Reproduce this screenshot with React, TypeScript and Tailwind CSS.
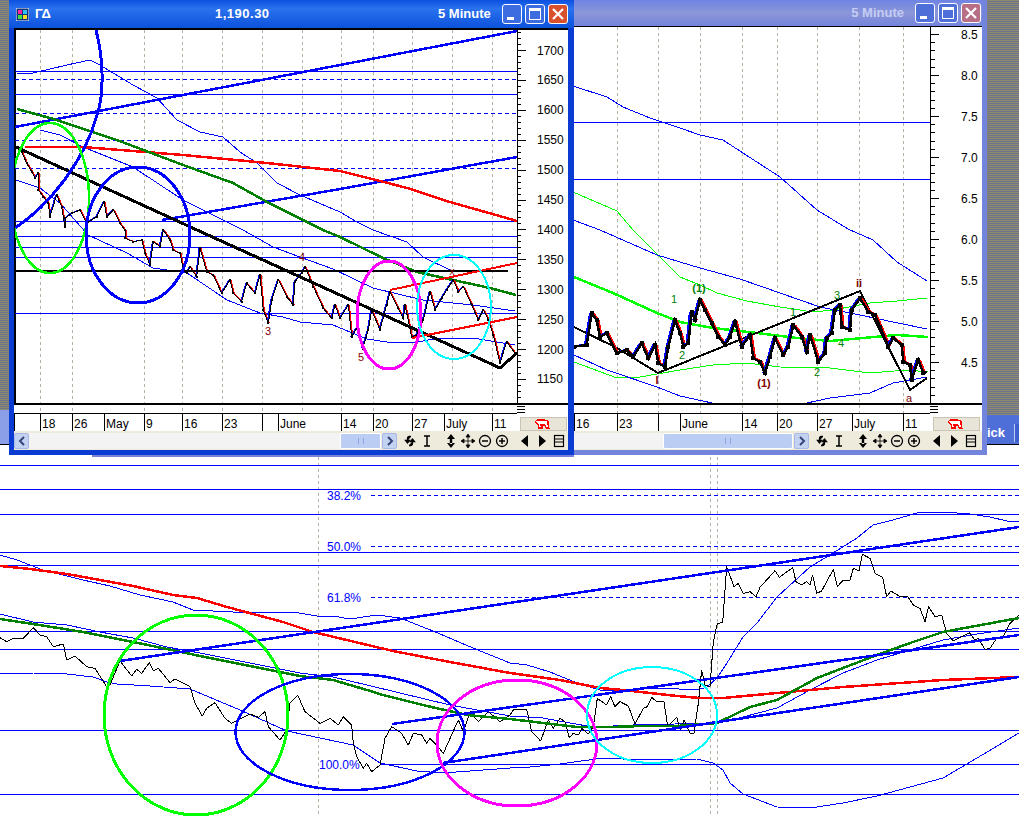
import React from 'react';

const BLUE = '#0000ff';
const RED = '#ff0000';
const DKGREEN = '#008000';
const LIME = '#00ff00';
const MAGENTA = '#ff00ff';
const CYAN = '#00ffff';
const MAROON = '#800000';
const GRID = '#b4b2a4';

// flat [x,y,x,y] list -> polyline points
const flat = (a: number[]) => {
  const out: string[] = [];
  for (let i = 0; i < a.length; i += 2) out.push(`${a[i]},${a[i + 1]}`);
  return out.join(' ');
};

// values read from the 3x crops, back to page pixels
const fromCrop = (ox: number, oy: number, a: number[]) =>
  a.map((v, i) => (i % 2 === 0 ? ox + v / 3 : oy + v / 3));

function Poly({ p, c, w = 1 }: { p: number[]; c: string; w?: number }) {
  return <polyline points={flat(p)} fill="none" stroke={c} strokeWidth={w} strokeLinejoin="round" />;
}

function HLine({ x1, x2, y, dashed, c = BLUE }: { x1: number; x2: number; y: number; dashed?: boolean; c?: string }) {
  return <line x1={x1} x2={x2} y1={y + 0.5} y2={y + 0.5} stroke={c} strokeWidth={1} strokeDasharray={dashed ? '4 3' : undefined} />;
}

function VGrid({ x, y1, y2 }: { x: number; y1: number; y2: number }) {
  return <line x1={x + 0.5} x2={x + 0.5} y1={y1} y2={y2} stroke={GRID} strokeWidth={1} strokeDasharray="3 3" />;
}

function Ring({ cx, cy, rx, ry, c, w }: { cx: number; cy: number; rx: number; ry: number; c: string; w: number }) {
  return <ellipse cx={cx} cy={cy} rx={rx} ry={ry} fill="none" stroke={c} strokeWidth={w} />;
}

// up moves are blue, down moves red, the black bars sit over them
function Price({ p, w, off, dot }: { p: number[]; w: number; off: number; dot: number }) {
  const segs = [];
  const dots = [];
  for (let i = 0; i + 3 < p.length; i += 2) {
    const up = p[i + 3] < p[i + 1];
    const dx = up ? -off : off;
    segs.push(
      <line key={i} x1={p[i] + dx} y1={p[i + 1]} x2={p[i + 2] + dx} y2={p[i + 3]} stroke={up ? BLUE : RED} strokeWidth={w} />
    );
    dots.push(<rect key={i} x={p[i] - dot / 2} y={p[i + 1] - dot / 2} width={dot} height={dot} fill="#000" />);
  }
  return (
    <g>
      {segs}
      <polyline points={flat(p)} fill="none" stroke="#000" strokeWidth={w} />
      {dots}
    </g>
  );
}

function Label({ x, y, c, size = 11, bold, children }: { x: number; y: number; c: string; size?: number; bold?: boolean; children: React.ReactNode }) {
  return (
    <text x={x} y={y} fill={c} fontSize={size} fontWeight={bold ? 700 : 400} textAnchor="middle">
      {children}
    </text>
  );
}

function DateAxis({ ticks, x1, x2, axisX, right }: { ticks: [number, string][]; x1: number; x2: number; axisX: number; right: number }) {
  const b = axisX + 20;
  return (
    <g>
      <rect x={axisX + 1} y={404} width={right - axisX} height={27} fill="#fff" />
      <line x1={x1} x2={x2} y1={403.5} y2={403.5} stroke="#000" strokeWidth={2} />
      <line x1={x1} x2={axisX} y1={413.5} y2={413.5} stroke="#000" strokeWidth={1} />
      {ticks.map(([x, t]) => (
        <g key={`${x}${t}`}>
          <line x1={x + 0.5} x2={x + 0.5} y1={414} y2={431} stroke="#000" strokeWidth={1} />
          <text x={x + 2} y={428} fontSize={12} fill="#000">{t}</text>
        </g>
      ))}
      <line x1={axisX} x2={axisX + 8} y1={406} y2={406} stroke="#000" />
      <line x1={axisX} x2={axisX + 8} y1={409} y2={409} stroke="#000" />
      <line x1={axisX} x2={axisX + 8} y1={412} y2={412} stroke="#000" />
      <rect x={axisX + 3} y={417} width={46} height={13} fill="#e8e5d8" stroke="#c8c5b4" />
      {/* the small red bull */}
      <path d={`M${b} 420h8l3 1v3l1 4h-3l-1-3h-3v3h-3l-1-4l-3-2z`} fill="#fff" stroke={RED} strokeWidth={1.2} />
      <rect x={b + 3} y={424} width={3} height={2} fill={RED} />
    </g>
  );
}

function WinButton({ kind, dim }: { kind: 'min' | 'max' | 'close'; dim?: boolean }) {
  const bg =
    kind === 'close'
      ? dim ? 'bg-[#b86f86]' : 'bg-[#d8502c]'
      : dim ? 'bg-[#4f6fd8]' : 'bg-[#3d6be0]';
  return (
    <div className={`w-[20px] h-[20px] rounded-[3px] border border-white flex items-center justify-center ${bg}`}>
      {kind === 'min' && <div className="w-[7px] h-[3px] bg-white mt-[8px] mr-[3px]" />}
      {kind === 'max' && <div className="w-[12px] h-[12px] border border-white border-t-[3px]" />}
      {kind === 'close' && (
        <svg width="12" height="12" viewBox="0 0 12 12">
          <path d="M1 1L11 11M11 1L1 11" stroke="#fff" strokeWidth="2.2" />
        </svg>
      )}
    </div>
  );
}

function ToolIcons() {
  return (
    <div className="flex items-center h-full pl-[6px] gap-[3px] shrink-0">
      <svg width="14" height="14" viewBox="0 0 14 14"><path d="M8 2.5H6.5C5 2.5 4.5 3.5 4.5 5v2M6 13.5M6 11.5h1.5C9 11.5 9.5 10.500 9.500 9V7M2.500 6.500h4L4.500 9zM7.500 7.500h4L9.500 5z" stroke="#000" strokeWidth="1.3" fill="#000" /></svg>
      <svg width="14" height="14" viewBox="0 0 14 14"><path d="M4 2h6M7 2v10M4 12h6" stroke="#000" strokeWidth="1.5" fill="none" /></svg>
      <div className="w-[4px]" />
      <svg width="14" height="14" viewBox="0 0 14 14"><path d="M7 0l4 5H3zM7 14l4-5H3zM5.800 4h2.400v6H5.800z" fill="#000" /></svg>
      <svg width="14" height="14" viewBox="0 0 14 14"><path d="M7 1v12M1 7h12M7 0l2 3H5zM7 14l2-3H5zM0 7l3-2v4zM14 7l-3-2v4z" stroke="#000" strokeWidth="0.8" fill="#000" /></svg>
      <svg width="14" height="14" viewBox="0 0 14 14"><circle cx="7" cy="7" r="5.500" stroke="#000" strokeWidth="1.300" fill="none" /><path d="M4 7h6" stroke="#000" strokeWidth="1.500" /></svg>
      <svg width="14" height="14" viewBox="0 0 14 14"><circle cx="7" cy="7" r="5.500" stroke="#000" strokeWidth="1.300" fill="none" /><path d="M4 7h6M7 4v6" stroke="#000" strokeWidth="1.500" /></svg>
      <div className="w-[3px]" />
      <svg width="14" height="14" viewBox="0 0 14 14"><path d="M3 7l7-6v12z" fill="#000" /></svg>
      <svg width="14" height="14" viewBox="0 0 14 14"><path d="M11 7L4 1v12z" fill="#000" /></svg>
      <svg width="14" height="14" viewBox="0 0 14 14"><rect x="2.500" y="1.500" width="9" height="11" fill="none" stroke="#000" strokeWidth="1.200" /><path d="M2 5h10M2 8h10" stroke="#000" /></svg>
    </div>
  );
}

function Toolbar({ left, track, thumb }: { left?: boolean; track: number; thumb: number }) {
  return (
    <div className="h-[19px] flex items-center bg-[#eeebdd]">
      {left && (
        <div className="w-[15px] h-[16px] shrink-0 rounded-[2px] bg-[#c4d2f2] border border-[#a8b8e8] flex items-center justify-center">
          <svg width="8" height="10" viewBox="0 0 8 10"><path d="M6 1L2 5l4 4" stroke="#33447a" strokeWidth="2" fill="none" /></svg>
        </div>
      )}
      <div className="h-[16px] shrink-0 flex justify-end bg-[#f4f3f4]" style={{ width: track }}>
        <div className="h-[16px] rounded-[2px] bg-[#bccdf4] border border-white flex items-center justify-center" style={{ width: thumb }}>
          <div className="w-[6px] h-[6px] border-x border-[#8fa4e0]" />
        </div>
      </div>
      <div className="w-[15px] h-[16px] shrink-0 ml-[1px] rounded-[2px] bg-[#c4d2f2] border border-[#a8b8e8] flex items-center justify-center">
        <svg width="8" height="10" viewBox="0 0 8 10"><path d="M2 1l4 4-4 4" stroke="#33447a" strokeWidth="2" fill="none" /></svg>
      </div>
      <ToolIcons />
    </div>
  );
}

const w1Grid = [40, 72, 144, 182, 222, 262, 302, 341, 373, 412, 452, 492];
const w1Dates: [number, string][] = [[14, ''], [40, '18'], [72, '26'], [104, 'May'], [144, '9'], [182, '16'], [222, '23'], [262, ''], [278, 'June'], [341, '14'], [373, '20'], [412, '27'], [444, 'July'], [492, '11']];
const w1Axis = ['1700', '1650', '1600', '1550', '1500', '1450', '1400', '1350', '1300', '1250', '1200', '1150'];

const w1Price = [
  ...fromCrop(0, 0, [48, 440, 65, 455, 80, 490, 95, 515, 105, 535, 115, 520, 115, 570, 130, 590, 145, 610, 150, 650, 170, 585, 185, 620, 195, 680, 195, 655, 215, 640, 240, 630, 260, 670, 290, 650, 312, 605, 320, 650, 340, 630, 360, 670, 375, 690]),
  ...fromCrop(0, 230, [375, 25, 400, 35, 425, 30, 435, 70, 450, 105, 460, 35, 480, 50, 490, 0, 510, 30, 520, 60, 540, 70, 550, 120, 560, 130, 570, 110, 590, 140, 600, 55, 620, 125, 640, 135, 665, 190, 690, 150, 700, 190, 725, 215, 740, 160, 765, 190, 780, 135, 790, 240, 805, 280, 815, 210, 835, 150, 860, 200, 880, 225, 885, 155, 905, 130, 915, 110, 940, 170, 970, 235, 995, 265, 1005, 225]),
  ...fromCrop(340, 230, [0, 265, 25, 225, 35, 320, 50, 295, 68, 355, 85, 300, 95, 240, 120, 300, 140, 225, 150, 185, 175, 235, 190, 265, 195, 225, 215, 320, 230, 315, 250, 270, 270, 185, 285, 240, 305, 205, 320, 180, 340, 150, 355, 185, 370, 170, 395, 225, 415, 270, 430, 240, 445, 270, 460, 315, 480, 400, 500, 335, 525, 370]),
];

function Chart1() {
  const ticks = [];
  for (let i = -3; i <= 58; i++) {
    const y = Math.round(50 + 5.98 * i) + 0.5;
    ticks.push(<line key={i} x1={517} x2={i % 5 === 0 ? 526 : 521} y1={y} y2={y} stroke="#000" />);
  }
  return (
    <svg width={554} height={403} viewBox="14 28 554 403" className="block bg-white" shapeRendering="crispEdges" fontFamily="'Liberation Sans', sans-serif">
      <clipPath id="plot1"><rect x={15} y={30} width={502} height={373} /></clipPath>
      <line x1={14} x2={568} y1={29} y2={29} stroke="#000" strokeWidth={2} />
      <line x1={14.5} x2={14.5} y1={29} y2={403} stroke="#000" strokeWidth={2} />
      {w1Grid.map((x) => <VGrid key={x} x={x} y1={30} y2={414} />)}
      <g clipPath="url(#plot1)">
        {[71, 94, 221, 236, 247, 257, 313].map((y) => <HLine key={y} x1={15} x2={517} y={y} />)}
        {[79, 113, 140, 168].map((y) => <HLine key={y} x1={15} x2={517} y={y} dashed />)}
        <Poly c={BLUE} p={[17, 74, 33, 73, 67, 65, 90, 60, 100, 65, 133, 85, 157, 98, 177, 120, 200, 132, 223, 137, 240, 152, 257, 163, 277, 183, 300, 195, 340, 212, 357, 222, 373, 230, 407, 242, 423, 257, 450, 270, 487, 272, 508, 271]} />
        <Poly c={BLUE} p={[40, 130, 60, 135, 83, 147, 133, 167, 183, 200, 243, 230, 273, 247, 300, 257, 333, 269, 373, 288, 423, 300, 473, 305, 515, 311]} />
        <Poly c={BLUE} p={[16, 180, 40, 188, 60, 203, 88, 235, 127, 253, 153, 268, 187, 273, 227, 300, 260, 313, 283, 317, 300, 322, 333, 325, 367, 339, 393, 343, 417, 342, 440, 338, 473, 338, 515, 345]} />
        <Poly c={BLUE} w={2.5} p={[15, 127, 340, 65, 517, 31]} />
        <Poly c={BLUE} w={2.5} p={[162, 220, 340, 189, 517, 157]} />
        <Poly c={RED} w={2.5} p={[25, 147, 83, 147, 183, 155, 267, 163, 340, 171, 380, 181, 407, 188, 450, 202, 517, 221]} />
        <Poly c={DKGREEN} w={2.5} p={[17, 109, 50, 118, 117, 140, 183, 165, 233, 183, 267, 202, 323, 230, 340, 237, 383, 258, 417, 272, 453, 280, 490, 288, 516, 295]} />
        <Price p={w1Price} w={1} off={1} dot={2} />
        <line x1={16} x2={508} y1={270.5} y2={270.5} stroke="#000" strokeWidth={2} />
        <Poly c="#000" w={3} p={[16, 147, 197, 230, 340, 295, 500, 368, 517, 353]} />
        <Poly c={RED} w={2} p={[390, 290, 517, 263]} />
        <Poly c={RED} w={2} p={[412, 338, 517, 317]} />
        <path d="M96 30C104 60 104 95 97 115C85 160 50 205 15 228" fill="none" stroke={BLUE} strokeWidth={3} />
        <Ring cx={50} cy={198} rx={39} ry={75} c={LIME} w={2.5} />
        <Ring cx={138} cy={235} rx={52} ry={68} c={BLUE} w={3} />
        <Ring cx={389} cy={315} rx={32} ry={54} c={MAGENTA} w={3} />
        <Ring cx={454} cy={307} rx={37} ry={52} c={CYAN} w={2} />
        <Label x={268} y={335} c={MAROON}>3</Label>
        <Label x={302} y={261} c={MAROON}>4</Label>
        <Label x={361} y={361} c={MAROON}>5</Label>
        <Label x={452} y={275} c={MAROON} size={10}>x</Label>
      </g>
      <line x1={517.5} x2={517.5} y1={30} y2={403} stroke="#000" />
      {ticks}
      {w1Axis.map((t, i) => (
        <text key={t} x={537} y={54.5 + i * 29.9} fontSize={12} fill="#000">{t}</text>
      ))}
      <DateAxis ticks={w1Dates} x1={14} x2={568} axisX={517} right={567} />
    </svg>
  );
}

const w2Grid = [617, 658, 700, 742, 777, 817, 859, 903];
const w2Dates: [number, string][] = [[574, '16'], [617, '23'], [658, ''], [680, 'June'], [742, '14'], [777, '20'], [817, '27'], [852, 'July'], [903, '11']];
const w2Axis = ['8.5', '8.0', '7.5', '7.0', '6.5', '6.0', '5.5', '5.0', '4.5'];

const w2Price = [
  ...fromCrop(340, 230, [703, 350, 740, 345, 755, 250, 770, 270, 780, 320, 800, 310, 830, 370, 860, 360, 880, 380, 905, 340, 925, 385, 945, 345, 955, 400, 975, 410, 985, 350, 1005, 270, 1020, 310]),
  ...fromCrop(680, 230, [10, 350, 25, 340, 35, 245, 45, 270, 60, 210, 75, 240, 95, 280, 115, 320, 135, 345, 150, 320, 165, 275, 185, 350, 210, 315, 220, 385, 240, 395, 255, 430, 270, 380, 285, 325, 310, 375, 325, 350, 340, 285, 365, 320, 380, 365, 390, 315, 415, 395, 435, 370, 440, 325, 455, 310, 465, 240, 480, 225, 485, 290, 510, 300, 515, 240, 540, 205, 565, 245, 585, 255, 600, 290, 625, 350, 640, 325, 665, 345, 670, 395, 690, 405, 695, 450, 715, 390, 730, 430, 740, 425]),
];

function Chart2() {
  const ticks = [];
  for (let i = 0; i <= 45; i++) {
    const y = Math.round(34 + 8.2 * i) + 0.5;
    ticks.push(<line key={i} x1={930} x2={i % 5 === 0 ? 939 : 935} y1={y} y2={y} stroke="#000" />);
  }
  return (
    <svg width={408} height={405} viewBox="574 26 408 405" className="block bg-white" shapeRendering="crispEdges" fontFamily="'Liberation Sans', sans-serif">
      <clipPath id="plot2"><rect x={574} y={27} width={356} height={376} /></clipPath>
      <line x1={574} x2={982} y1={26.5} y2={26.5} stroke="#000" />
      {w2Grid.map((x) => <VGrid key={x} x={x} y1={27} y2={414} />)}
      <g clipPath="url(#plot2)">
        <HLine x1={574} x2={930} y={122} />
        <HLine x1={574} x2={930} y={179} />
        <Poly c={BLUE} p={[573, 86, 607, 97, 623, 107, 650, 118, 680, 128, 700, 135, 723, 140, 743, 153, 780, 177, 817, 210, 848, 229, 873, 240, 897, 262, 927, 281]} />
        <Poly c={LIME} p={[573, 192, 617, 211, 633, 230, 660, 257, 680, 277, 700, 285, 717, 293, 747, 301, 780, 307, 813, 312, 833, 310, 870, 303, 897, 301, 927, 298]} />
        <Poly c={BLUE} p={[573, 220, 600, 230, 657, 255, 680, 262, 700, 268, 740, 279, 780, 293, 820, 307, 860, 315, 893, 322, 927, 329]} />
        <Poly c={LIME} w={2.5} p={[574, 277, 613, 293, 657, 313, 680, 322, 713, 328, 757, 333, 797, 338, 830, 341, 863, 338, 897, 335, 928, 337]} />
        <Poly c={LIME} p={[574, 362, 617, 378, 640, 377, 680, 370, 713, 365, 747, 363, 780, 367, 830, 368, 870, 373, 907, 370, 928, 372]} />
        <Poly c={BLUE} p={[574, 355, 607, 370, 657, 387, 680, 396, 712, 403]} />
        <Poly c={BLUE} p={[807, 403, 830, 398, 870, 393, 893, 383, 927, 377]} />
        <Poly c="#000" w={2} p={[574, 327, 617, 348, 658, 373, 860, 291, 910, 390, 927, 378]} />
        <Price p={w2Price} w={2.5} off={1.5} dot={4} />
        <Label x={674} y={303} c="#008000">1</Label>
        <Label x={699} y={292} c="#008000" bold>(1)</Label>
        <Label x={682} y={359} c="#008000">2</Label>
        <Label x={657} y={384} c={MAROON} bold>I</Label>
        <Label x={764} y={387} c={MAROON} bold>(1)</Label>
        <Label x={793} y={316} c="#008000">1</Label>
        <Label x={837} y={299} c="#008000">3</Label>
        <Label x={841} y={347} c="#008000">4</Label>
        <Label x={817} y={376} c="#008000">2</Label>
        <Label x={859} y={287} c={MAROON} bold>ii</Label>
        <Label x={909} y={402} c={MAROON}>a</Label>
      </g>
      <line x1={930.5} x2={930.5} y1={27} y2={403} stroke="#000" />
      {ticks}
      {w2Axis.map((t, i) => (
        <text key={t} x={961} y={39 + i * 41} fontSize={12} fill="#000">{t}</text>
      ))}
      <DateAxis ticks={w2Dates} x1={574} x2={982} axisX={930} right={981} />
    </svg>
  );
}

const mainPrice = [
  ...fromCrop(0, 460, [0, 533, 20, 545, 40, 535, 70, 535, 100, 503, 120, 525, 140, 530, 160, 560, 190, 552, 200, 600, 225, 588, 260, 620, 285, 625, 320, 680, 330, 675, 360, 603, 395, 648, 410, 628, 425, 640, 448, 608, 460, 632, 475, 625, 510, 668, 525, 657, 570, 680, 585, 730, 607, 768, 620, 745, 645, 728, 675, 775, 695, 790, 750, 762, 775, 772, 795, 755, 805, 800, 840, 840, 860, 810, 870, 730, 893, 705, 915, 755, 960, 790, 990, 775, 1015, 795, 1030, 770, 1055, 795, 1060, 850, 1070, 890, 1090, 925, 1100, 910, 1115, 935, 1140, 915, 1155, 835, 1175, 800, 1205, 820, 1225, 855, 1240, 820, 1265, 825, 1280, 850, 1290, 835, 1310, 855, 1330, 880, 1375, 780, 1390, 815, 1410, 755, 1435, 785, 1465, 755, 1500, 785, 1530, 765]),
  ...fromCrop(510, 460, [10, 750, 50, 748, 65, 815, 92, 843, 115, 780, 130, 805, 150, 775, 165, 785, 178, 833, 190, 820, 205, 825, 215, 805, 235, 822, 250, 800, 262, 715, 290, 735, 302, 710, 315, 740, 330, 725, 355, 738, 375, 792, 400, 745, 412, 740, 425, 712, 440, 725, 462, 725, 473, 800, 500, 772, 512, 810, 522, 780, 540, 820, 552, 820, 565, 730, 575, 630, 585, 675, 600, 680, 610, 545, 622, 490, 638, 488, 650, 320, 672, 380, 685, 370, 700, 400, 720, 395, 738, 410, 750, 382, 795, 332, 808, 352, 848, 323, 858, 365, 875, 375, 890, 365, 900, 375, 908, 345, 920, 400, 935, 393, 970, 328, 982, 380, 1000, 360, 1020, 360, 1030, 325, 1047, 332, 1057, 283, 1080, 295, 1095, 340, 1118, 352, 1130, 410, 1143, 393, 1170, 410, 1192, 408, 1210, 435, 1230, 445, 1245, 485, 1256, 440, 1275, 470, 1295, 465, 1310, 520, 1330, 543, 1378, 518, 1395, 540, 1405, 535, 1425, 568, 1440, 565, 1460, 535, 1480, 530, 1500, 490, 1527, 465]),
];

function MainChart() {
  return (
    <svg width={1019} height={359} viewBox="0 457 1019 359" className="block bg-white" shapeRendering="crispEdges" fontFamily="'Liberation Sans', sans-serif">
      {[318, 710, 717].map((x) => <VGrid key={x} x={x} y1={457} y2={816} />)}
      {[465, 489, 514, 552, 565, 631, 649, 730, 794].map((y) => <HLine key={y} x1={0} x2={1019} y={y} />)}
      <HLine x1={380} x2={1019} y={764} />
      {[495, 546, 597].map((y) => <HLine key={y} x1={371} x2={1019} y={y} dashed />)}
      <text x={327} y={500} fontSize={12} fill={BLUE}>38.2%</text>
      <text x={327} y={551} fontSize={12} fill={BLUE}>50.0%</text>
      <text x={327} y={602} fontSize={12} fill={BLUE}>61.8%</text>
      <text x={319} y={769} fontSize={12} fill={BLUE}>100.0%</text>
      <Poly c={BLUE} p={[0, 555, 17, 560, 43, 570, 83, 580, 110, 586, 140, 595, 173, 602, 193, 610, 233, 612, 267, 613, 293, 612, 317, 616, 333, 616, 350, 619, 377, 615, 400, 618, 433, 631, 473, 648, 510, 663, 527, 665, 550, 672, 577, 683, 600, 690, 627, 690, 660, 688, 697, 690, 707, 687, 717, 678, 727, 663, 743, 637, 757, 623, 777, 597, 810, 567, 833, 553, 857, 538, 873, 525, 893, 520, 917, 513, 943, 512, 970, 514, 990, 517, 1007, 521, 1019, 521]} />
      <Poly c={BLUE} p={[0, 614, 33, 622, 67, 625, 100, 632, 133, 638, 167, 647, 200, 653, 250, 663, 300, 673, 333, 677, 367, 685, 400, 693, 450, 705, 510, 716, 543, 718, 570, 723, 593, 727, 633, 725, 717, 723, 743, 717, 777, 708, 810, 690, 843, 673, 877, 660, 910, 650, 943, 640, 977, 634, 1019, 628]} />
      <Poly c={BLUE} p={[0, 673, 33, 673, 67, 674, 93, 677, 107, 682, 117, 684, 150, 686, 190, 689, 240, 710, 287, 731, 353, 745, 380, 763, 417, 771, 443, 773, 510, 768, 530, 767, 560, 764, 603, 758, 643, 760, 697, 759, 713, 763, 723, 770, 730, 783, 743, 794, 777, 807, 810, 808, 843, 803, 877, 796, 943, 778, 977, 758, 1019, 733]} />
      <Poly c="#000" p={mainPrice} />
      <Poly c={RED} w={2.5} p={[0, 566, 30, 569, 67, 574, 133, 586, 173, 595, 197, 598, 227, 607, 283, 622, 313, 632, 393, 651, 450, 662, 510, 673, 560, 680, 600, 688, 623, 690, 677, 696, 700, 698, 723, 698, 777, 693, 843, 687, 943, 680, 1019, 677]} />
      <Poly c={DKGREEN} w={2.5} p={[0, 619, 33, 624, 83, 632, 133, 642, 167, 649, 200, 656, 250, 666, 300, 676, 333, 680, 367, 690, 383, 695, 427, 706, 467, 715, 510, 719, 543, 723, 577, 727, 610, 727, 643, 726, 677, 726, 717, 723, 750, 707, 777, 700, 817, 678, 877, 655, 910, 643, 943, 632, 1019, 618]} />
      <Poly c={BLUE} w={2.5} p={[120, 661, 1019, 527]} />
      <Poly c={BLUE} w={2.5} p={[392, 724, 1019, 635]} />
      <Poly c={BLUE} w={2.5} p={[443, 763, 1019, 677]} />
      <Ring cx={196} cy={715} rx={92} ry={100} c={LIME} w={3} />
      <Ring cx={350} cy={732} rx={114.5} ry={58} c={BLUE} w={2.5} />
      <Ring cx={517} cy={743} rx={80} ry={63} c={MAGENTA} w={3} />
      <Ring cx={652} cy={715} rx={65} ry={48} c={CYAN} w={2} />
    </svg>
  );
}

const dither = "bg-[repeating-linear-gradient(0deg,#8c8a72_0px,#8c8a72_1px,#6f7488_1px,#6f7488_2px)]";

export default function App() {
  return (
    <div className="w-[1019px] h-[816px] overflow-hidden bg-white flex flex-col font-['Liberation_Sans',sans-serif]">
      <div className="flex h-[457px]">
        {/* Desktop behind, left */}
        <div className="w-[9px] flex flex-col">
          <div className={`h-[410px] ${dither}`} />
          <div className="h-[35px] bg-[#8b9ee8] border-b border-black" />
        </div>

        {/* Active window */}
        <div className="w-[565px] flex flex-col">
          <div className="h-[455px] flex flex-col bg-[#0a3cd4] pl-[5px] pr-[6px] pb-[5px]">
            <div className="h-[28px] -ml-[5px] -mr-[6px] pl-[7px] pr-[6px] flex items-center text-white font-bold text-[13px] bg-[linear-gradient(180deg,#0b4fe0_0%,#2a72ee_30%,#0c52dc_100%)]">
              <svg width="13" height="13" viewBox="0 0 13 13" className="shrink-0">
                <rect width="13" height="13" fill="#10307a" stroke="#fff" strokeWidth="1" />
                <rect x="2" y="2" width="4" height="4" fill="#ff20a0" />
                <rect x="7" y="2" width="4" height="4" fill="#30c0ff" />
                <rect x="2" y="7" width="4" height="4" fill="#40e040" />
                <rect x="7" y="7" width="4" height="4" fill="#ffe020" />
              </svg>
              <span className="ml-[6px] w-[180px]">ΓΔ</span>
              <span className="w-[223px] tracking-[0.5px]">1,190.30</span>
              <span className="flex-1">5 Minute</span>
              <div className="flex gap-[3px]">
                <WinButton kind="min" />
                <WinButton kind="max" />
                <WinButton kind="close" />
              </div>
            </div>
            <Chart1 />
            <Toolbar left track={352} thumb={41} />
          </div>
          <div className="h-[2px] ml-[83px] bg-[#7a80d8]" />
        </div>

        {/* Window behind it, inactive */}
        <div className="w-[413px] h-[455px] flex flex-col bg-[#7384dc] pr-[5px] pb-[3px]">
          <div className="h-[26px] pr-[1px] flex items-center justify-end text-[#c4ccf4] font-bold text-[13px] bg-[linear-gradient(180deg,#6f84e4_0%,#8c96d8_50%,#7284dc_100%)]">
            <span className="mr-[11px]">5 Minute</span>
            <div className="flex gap-[3px]">
              <WinButton kind="min" dim />
              <WinButton kind="max" dim />
              <WinButton kind="close" dim />
            </div>
          </div>
          <Chart2 />
          <Toolbar track={219} thumb={130} />
        </div>

        {/* Desktop behind, right */}
        <div className="flex-1 flex flex-col">
          <div className={`h-[415px] ${dither}`} />
          <div className="h-[30px] bg-[#4f6fd8] border-b border-black flex items-center text-white font-bold text-[13px] pt-[6px]">
            <span>ick</span>
            <div className="ml-auto w-[5px] h-[18px] bg-[#3d5fd0] border-l border-[#c0ccf4]" />
          </div>
        </div>
      </div>
      <MainChart />
    </div>
  );
}
